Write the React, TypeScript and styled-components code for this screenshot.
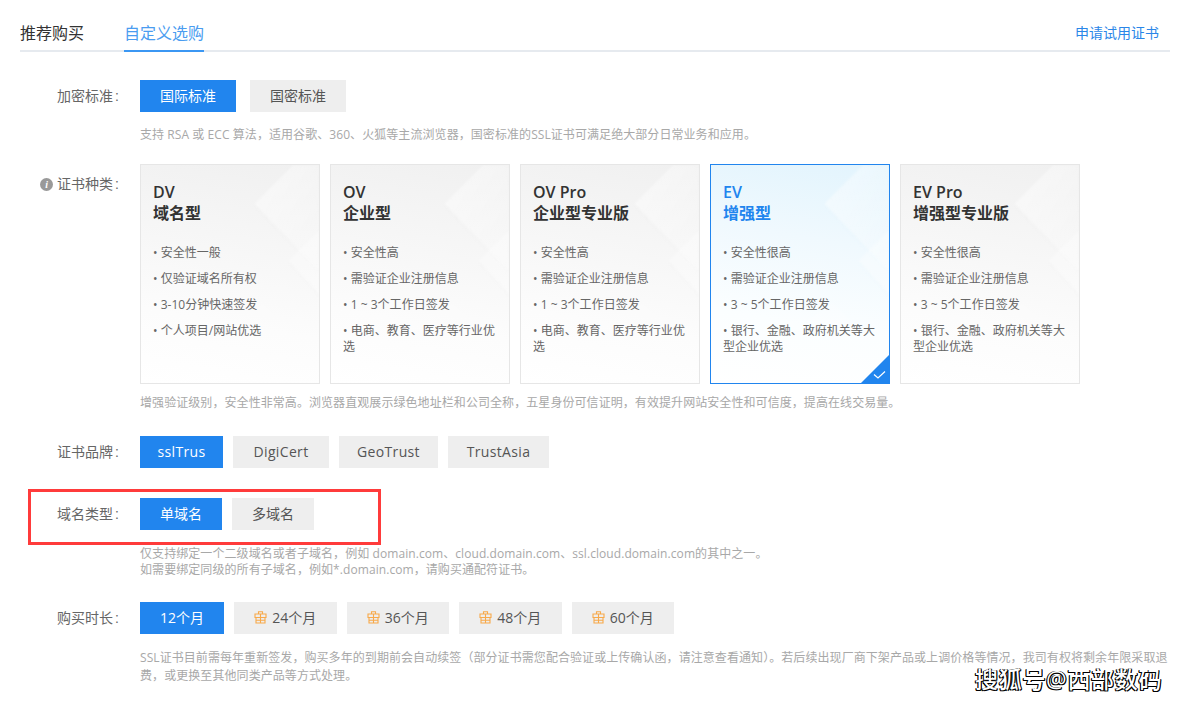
import React from "react";
import styled, { createGlobalStyle } from "styled-components";

const Global = createGlobalStyle`
  html, body { margin: 0; padding: 0; background: #fff; }
  body { font-family: "Open Sans", "Noto Sans CJK SC", sans-serif; color: #333; overflow: hidden; }
  * { box-sizing: border-box; }
`;
const Page = styled.div`
  position: relative; width: 1188px; height: 704px; padding: 16px 18px 0 20px; overflow: hidden;
`;
const Tabs = styled.div`
  display: flex; align-items: flex-end; height: 36px; border-bottom: 2px solid #e6eaef;
`;
const Tab = styled.div<{ $active?: boolean }>`
  font-size: 16px; line-height: 34px; height: 36px; margin-right: ${p => (p.$active ? "0" : "40px")}; margin-bottom: -2px;
  color: ${p => (p.$active ? "#4a9cf0" : "#333")};
  border-bottom: 2px solid ${p => (p.$active ? "#3b97f3" : "transparent")};
`;
const TrialLink = styled.div`
  margin-left: auto; margin-right: 11px; font-size: 14px; line-height: 34px; height: 34px; color: #2a86e8;
`;
const Row = styled.div<{ $top: number }>`
  display: flex; margin-top: ${p => p.$top}px;
`;
const Label = styled.div<{ $pad?: number }>`
  width: 99px; padding-top: ${p => p.$pad ?? 7}px; font-size: 14px; line-height: 18px; color: #666; white-space: nowrap;
  display: flex; justify-content: flex-end; align-items: center; align-self: flex-start; gap: 4px; margin-right: 21px;
`;
const InfoDot = styled.span`
  width: 13px; height: 13px; border-radius: 50%; background: #999; color: #fff; font: italic bold 10px/13px "Liberation Serif", serif; text-align: center;
`;
const Colon = styled.span`
  margin-left: 2px; font-family: "Liberation Sans", sans-serif;
`;
const Options = styled.div<{ $gap: number }>`
  display: flex; gap: ${p => p.$gap}px;
`;
const Option = styled.div<{ $w: number; $on?: boolean; $latin?: boolean }>`
  width: ${p => p.$w}px; height: 32px; padding-bottom: 2px; display: flex; align-items: center; justify-content: center; gap: 5px;
  font-size: 14px; letter-spacing: ${p => (p.$latin ? "0.35px" : "0")};
  background: ${p => (p.$on ? "#2185ee" : "#eeeeee")}; color: ${p => (p.$on ? "#fff" : "#555")};
`;
const Hint = styled.div<{ $top: number; $lh?: number; $w?: number }>`
  margin: ${p => p.$top}px 0 0 120px; font-size: 12px; letter-spacing: 0.07px; line-height: ${p => p.$lh ?? 16}px; color: #a8a8a8;
  ${p => (p.$w ? `width: ${p.$w}px;` : "")}
`;
const Cards = styled.div`
  display: flex; gap: 10px;
`;
const Card = styled.div<{ $on?: boolean }>`
  position: relative; width: 180px; height: 220px; padding: 17px 12px 0; overflow: hidden;
  border: 1px solid ${p => (p.$on ? "#2185ee" : "#e6e6e6")};
  background: ${p => (p.$on
    ? "linear-gradient(190deg, #e2f4fd 0%, #f0f9fe 35%, #fbfeff 70%, #ffffff 100%)"
    : "linear-gradient(190deg, #f0f0f0 0%, #f6f6f6 35%, #fcfcfc 70%, #ffffff 100%)")};
`;
const Decor = styled.svg`
  position: absolute; left: 0; top: 0; width: 178px; height: 218px; pointer-events: none; filter: blur(0.8px);
`;
const CardTitle = styled.div<{ $on?: boolean }>`
  position: relative; font-size: 16px; line-height: 21px; font-weight: 600; color: ${p => (p.$on ? "#2185ee" : "#333")};
`;
const Features = styled.ul`
  position: relative; list-style: none; margin: 21px 0 0; padding: 0; font-size: 12px; letter-spacing: 0.02px; line-height: 16px; color: #666;
`;
const Feature = styled.li`
  margin-bottom: 10px;
`;
const Corner = styled.svg`
  position: absolute; right: 0; bottom: 0; width: 28px; height: 28px;
`;
const RedBox = styled.div`
  position: absolute; left: 28px; top: 489px; width: 353px; height: 56px; border: 3px solid #ff3b3b;
`;
const Watermark = styled.div`
  position: absolute; left: 975px; top: 664px; font-size: 23px; line-height: 30px; font-weight: 500; color: #fff; letter-spacing: 0.7px; white-space: nowrap;
  text-shadow: -1px 1px 0 #000, 1px 1px 0 #000, -1px 0 0 #000, 1px 0 0 #000;
`;
const Gift = styled.svg`
  width: 13px; height: 13px; flex: none;
`;

const GiftIcon = () => (
  <Gift viewBox="0 0 13 13" fill="none" stroke="#f8a94a" strokeWidth="1.1">
    <path d="M1 3h11v3.500H1zM2 6.500V12h9V6.500M6.500 3v9M2 9.200h9M4.500 .8h4V3h-4z" />
  </Gift>
);

const DecorArt = ({ on }: { on?: boolean }) => (
  <Decor viewBox="0 0 178 218">
    <defs>
      <linearGradient id={on ? "edgeOn" : "edgeOff"} x1="0" y1="0" x2="1" y2="1">
        <stop offset="0" stopColor="#ffffff" stopOpacity="0.5" />
        <stop offset="1" stopColor="#ffffff" stopOpacity="0.1" />
      </linearGradient>
    </defs>
    <path d="M115 41 Q113 39 115 37 L156 -4 H182 V112 Z" fill={`url(#${on ? "edgeOn" : "edgeOff"})`} />
    <path d="M115 41 L182 112" fill="none" stroke={on ? "#e8f5fd" : "#f0f0f0"} strokeWidth="1.200" opacity="0.6" />
    <path d="M149 98 Q147 96 149 94 L182 62 V135 Z" fill="#ffffff" opacity="0.3" />
    <path d="M149 98 L182 135" fill="none" stroke={on ? "#eef8fe" : "#f4f4f4"} strokeWidth="1.200" opacity="0.6" />
    <path d="M96 158 Q94 156 98 153 L122 138 L182 196 V222 H150 Z" fill="#ffffff" opacity="0.2" />
  </Decor>
);

const cards = [
  { t: "DV", s: "域名型", f: ["安全性一般", "仅验证域名所有权", "3-10分钟快速签发", "个人项目/网站优选"] },
  { t: "OV", s: "企业型", f: ["安全性高", "需验证企业注册信息", "1 ~ 3个工作日签发", "电商、教育、医疗等行业优选"] },
  { t: "OV Pro", s: "企业型专业版", f: ["安全性高", "需验证企业注册信息", "1 ~ 3个工作日签发", "电商、教育、医疗等行业优选"] },
  { t: "EV", s: "增强型", on: true, f: ["安全性很高", "需验证企业注册信息", "3 ~ 5个工作日签发", "银行、金融、政府机关等大型企业优选"] },
  { t: "EV Pro", s: "增强型专业版", f: ["安全性很高", "需验证企业注册信息", "3 ~ 5个工作日签发", "银行、金融、政府机关等大型企业优选"] },
];

const LabelText = ({ children }: { children: string }) => (
  <span>{children}<Colon>:</Colon></span>
);

export default function App() {
  return (
    <Page>
      <Global />
      <Tabs>
        <Tab>推荐购买</Tab>
        <Tab $active>自定义选购</Tab>
        <TrialLink>申请试用证书</TrialLink>
      </Tabs>

      <Row $top={28}>
        <Label><LabelText>加密标准</LabelText></Label>
        <Options $gap={14}>
          <Option $w={96} $on>国际标准</Option>
          <Option $w={96}>国密标准</Option>
        </Options>
      </Row>
      <Hint $top={15}>支持 RSA 或 ECC 算法，适用谷歌、360、火狐等主流浏览器，国密标准的SSL证书可满足绝大部分日常业务和应用。</Hint>

      <Row $top={21}>
        <Label $pad={11}><InfoDot>i</InfoDot><LabelText>证书种类</LabelText></Label>
        <Cards>
          {cards.map(c => (
            <Card key={c.t} $on={c.on}>
              <DecorArt on={c.on} />
              <CardTitle $on={c.on}>{c.t}<br />{c.s}</CardTitle>
              <Features>
                {c.f.map(x => <Feature key={x}>• {x}</Feature>)}
              </Features>
              {c.on && (
                <Corner viewBox="0 0 28 28">
                  <path d="M28 0V28H0Z" fill="#2185ee" />
                  <path d="M13 19.500l4 3.500 7-6.500" fill="none" stroke="#fff" strokeWidth="1.200" />
                </Corner>
              )}
            </Card>
          ))}
        </Cards>
      </Row>
      <Hint $top={11}>增强验证级别，安全性非常高。浏览器直观展示绿色地址栏和公司全称，五星身份可信证明，有效提升网站安全性和可信度，提高在线交易量。</Hint>

      <Row $top={25}>
        <Label><LabelText>证书品牌</LabelText></Label>
        <Options $gap={10}>
          <Option $w={83} $on $latin>sslTrus</Option>
          <Option $w={96} $latin>DigiCert</Option>
          <Option $w={99} $latin>GeoTrust</Option>
          <Option $w={101} $latin>TrustAsia</Option>
        </Options>
      </Row>

      <Row $top={30}>
        <Label><LabelText>域名类型</LabelText></Label>
        <Options $gap={10}>
          <Option $w={82} $on>单域名</Option>
          <Option $w={82}>多域名</Option>
        </Options>
      </Row>
      <Hint $top={16}>
        仅支持绑定一个二级域名或者子域名，例如 domain.com、cloud.domain.com、ssl.cloud.domain.com的其中之一。<br />
        如需要绑定同级的所有子域名，例如*.domain.com，请购买通配符证书。
      </Hint>

      <Row $top={24}>
        <Label><LabelText>购买时长</LabelText></Label>
        <Options $gap={10}>
          <Option $w={84} $on>12个月</Option>
          {["24个月", "36个月", "48个月", "60个月"].map(m => (
            <Option key={m} $w={102.5}><GiftIcon />{m}</Option>
          ))}
        </Options>
      </Row>
      <Hint $top={15} $lh={18} $w={1032}>
        SSL证书目前需每年重新签发，购买多年的到期前会自动续签（部分证书需您配合验证或上传确认函，请注意查看通知）。若后续出现厂商下架产品或上调价格等情况，我司有权将剩余年限采取退费，或更换至其他同类产品等方式处理。
      </Hint>

      <RedBox />
      <Watermark>搜狐号@西部数码</Watermark>
    </Page>
  );
}
